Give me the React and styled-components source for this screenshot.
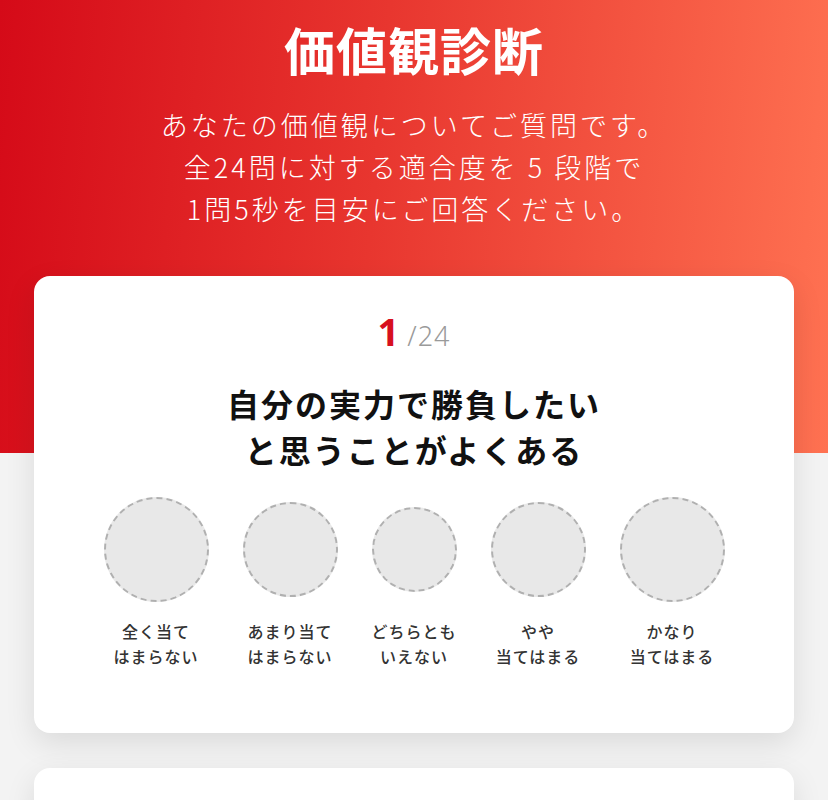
import styled, { createGlobalStyle } from "styled-components";

const GlobalStyle = createGlobalStyle`
  * { box-sizing: border-box; }
  html, body { margin: 0; padding: 0; }
  body {
    font-family: "Noto Sans CJK JP", "Noto Sans", sans-serif;
    background: #f3f3f3;
  }
`;

const opciones = [
  { size: 105, label: ["全く当て", "はまらない"] },
  { size: 95, label: ["あまり当て", "はまらない"] },
  { size: 85, label: ["どちらとも", "いえない"] },
  { size: 95, label: ["やや", "当てはまる"] },
  { size: 105, label: ["かなり", "当てはまる"] },
];

export default function App() {
  return (
    <Page>
      <GlobalStyle />
      <Hero>
        <Title>価値観診断</Title>
        <Lead>
          あなたの価値観についてご質問です。
          <br />
          全24問に対する適合度を 5 段階で
          <br />
          1問5秒を目安にご回答ください。
        </Lead>
      </Hero>

      <Lista>
        <Card>
          <Contador>
            <Actual>1</Actual>
            <Total>/24</Total>
          </Contador>
          <Pregunta>
            自分の実力で勝負したい
            <br />
            と思うことがよくある
          </Pregunta>
          <Escala>
            {opciones.map((o, i) => (
              <Opcion key={i} $size={o.size}>
                <Circulo $size={o.size} />
                <Etiqueta>
                  {o.label[0]}
                  <br />
                  {o.label[1]}
                </Etiqueta>
              </Opcion>
            ))}
          </Escala>
        </Card>
        <Card $alto={200} />
      </Lista>
    </Page>
  );
}

const Page = styled.div`
  min-height: 100vh;
  width: 100%;
  overflow: hidden;
  background:
    linear-gradient(95deg, #d50a18 0%, #e8362f 45%, #ff7252 100%) top / 100% 453px no-repeat,
    #f3f3f3;
`;

const Hero = styled.header`
  display: flex;
  flex-direction: column;
  align-items: center;
  padding: 12px 0 46px;
  color: #fff;
`;

const Title = styled.h1`
  margin: 0;
  font-size: 51px;
  font-weight: 700;
  line-height: 74px;
  letter-spacing: 1px;
`;

const Lead = styled.p`
  margin: 18px 0 0;
  font-size: 27px;
  font-weight: 300;
  line-height: 42px;
  letter-spacing: 3px;
  text-align: center;
`;

const Lista = styled.section`
  display: flex;
  flex-direction: column;
  gap: 35px;
  padding: 0 34px 40px;
`;

const Card = styled.article`
  background: #fff;
  border-radius: 16px;
  box-shadow: 0 10px 30px rgba(0, 0, 0, 0.1);
  min-height: ${({ $alto }) => ($alto ? `${$alto}px` : "auto")};
  padding: 36px 0 64px;
  display: flex;
  flex-direction: column;
  align-items: center;
`;

const Contador = styled.div`
  display: flex;
  align-items: baseline;
  gap: 8px;
  line-height: 1;
`;

const Actual = styled.span`
  font-family: "Noto Sans", "Noto Sans CJK JP", sans-serif;
  font-size: 38px;
  font-weight: 700;
  color: #d7101e;
`;

const Total = styled.span`
  font-family: "Noto Sans", "Noto Sans CJK JP", sans-serif;
  font-size: 27px;
  font-weight: 300;
  color: #9a9a9a;
  letter-spacing: 1px;
`;

const Pregunta = styled.h2`
  margin: 30px 0 0;
  font-size: 32px;
  font-weight: 700;
  line-height: 46px;
  letter-spacing: 2px;
  color: #111;
  text-align: center;
`;

const Escala = styled.div`
  display: flex;
  justify-content: center;
  align-items: flex-start;
  gap: 34px;
  margin-top: 25px;
  height: 172px;
`;

const Opcion = styled.div`
  flex: none;
  width: ${({ $size }) => $size}px;
  height: 172px;
  display: flex;
  flex-direction: column;
  align-items: center;
  justify-content: space-between;
  padding-top: ${({ $size }) => (105 - $size) / 2}px;
`;

const Circulo = styled.div`
  width: ${({ $size }) => $size}px;
  height: ${({ $size }) => $size}px;
  border-radius: 50%;
  background: #e8e8e8;
  border: 2px dashed #b0b0b0;
  flex: none;
`;

const Etiqueta = styled.p`
  margin: 0;
  white-space: nowrap;
  font-size: 16px;
  font-weight: 500;
  line-height: 25px;
  letter-spacing: 1px;
  color: #333;
  text-align: center;
`;
